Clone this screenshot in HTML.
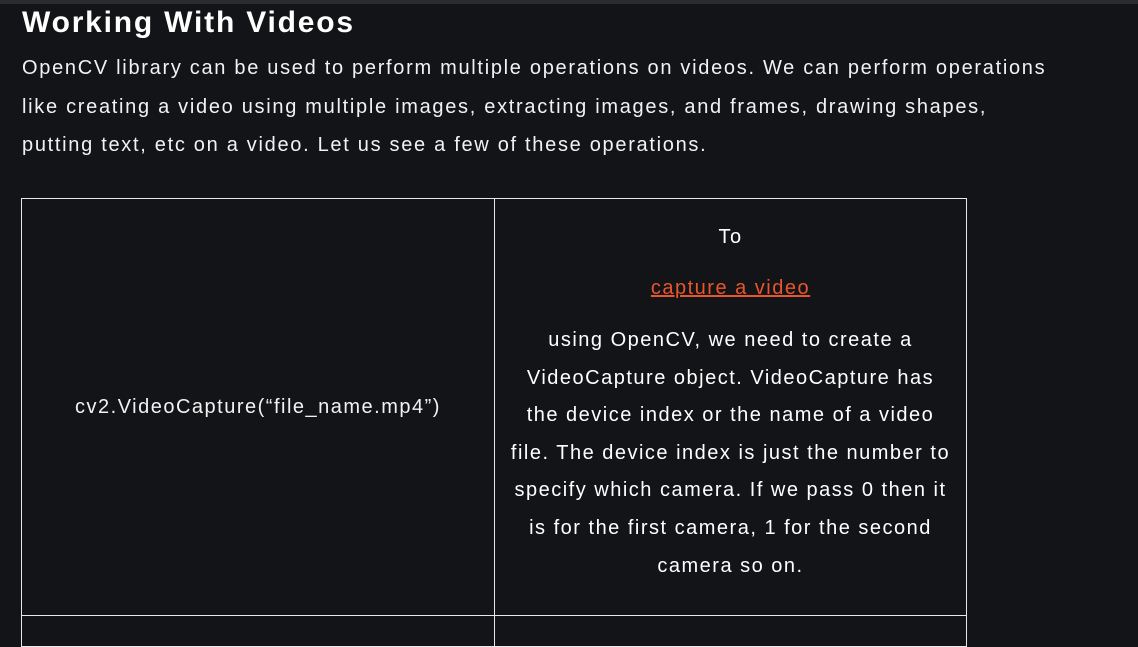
<!DOCTYPE html>
<html><head><style>
html,body{margin:0;padding:0;background:#131417;width:1138px;height:624px;overflow:hidden;color:#fff;font-family:"Liberation Sans",sans-serif}
.bar{position:absolute;top:0;left:0;width:1138px;height:4px;background:#2b2b2e}
h2{position:absolute;left:22px;top:4px;margin:0;font-size:30px;font-weight:bold;line-height:38px;letter-spacing:1.8px}
.p{position:absolute;left:22px;top:49px;font-size:20px;line-height:38.5px;white-space:nowrap;color:#f2f2f2;letter-spacing:1.7px}
table{position:absolute;left:21px;top:198px;border-collapse:collapse}
td{border:1px solid #e8e8e8;padding:0;vertical-align:middle;text-align:center;font-size:20px;color:#f2f2f2;letter-spacing:1.5px}
.c{position:absolute;left:495px;width:471px;text-align:center;font-size:20px;white-space:nowrap;letter-spacing:1.5px}
a{color:#e9562b;text-decoration:underline}
</style></head><body>
<div class="bar"></div>
<h2>Working With Videos</h2>
<div class="p">OpenCV library can be used to perform multiple operations on videos. We can perform operations<br>like creating a video using multiple images, extracting images, and frames, drawing shapes,<br>putting text, etc on a video. Let us see a few of these operations.</div>
<table><tr><td style="width:472px;height:416px">cv2.VideoCapture(“file_name.mp4”)</td><td style="width:471px;height:416px"></td></tr>
<tr><td style="height:30px"></td><td></td></tr></table>
<div class="c" style="top:226px">To</div>
<div class="c" style="top:277px"><a>capture a video</a></div>
<div class="c" style="top:322px;line-height:37.6px">using OpenCV, we need to create a<br>VideoCapture object. VideoCapture has<br>the device index or the name of a video<br>file. The device index is just the number to<br>specify which camera. If we pass 0 then it<br>is for the first camera, 1 for the second<br>camera so on.</div>
</body></html>
